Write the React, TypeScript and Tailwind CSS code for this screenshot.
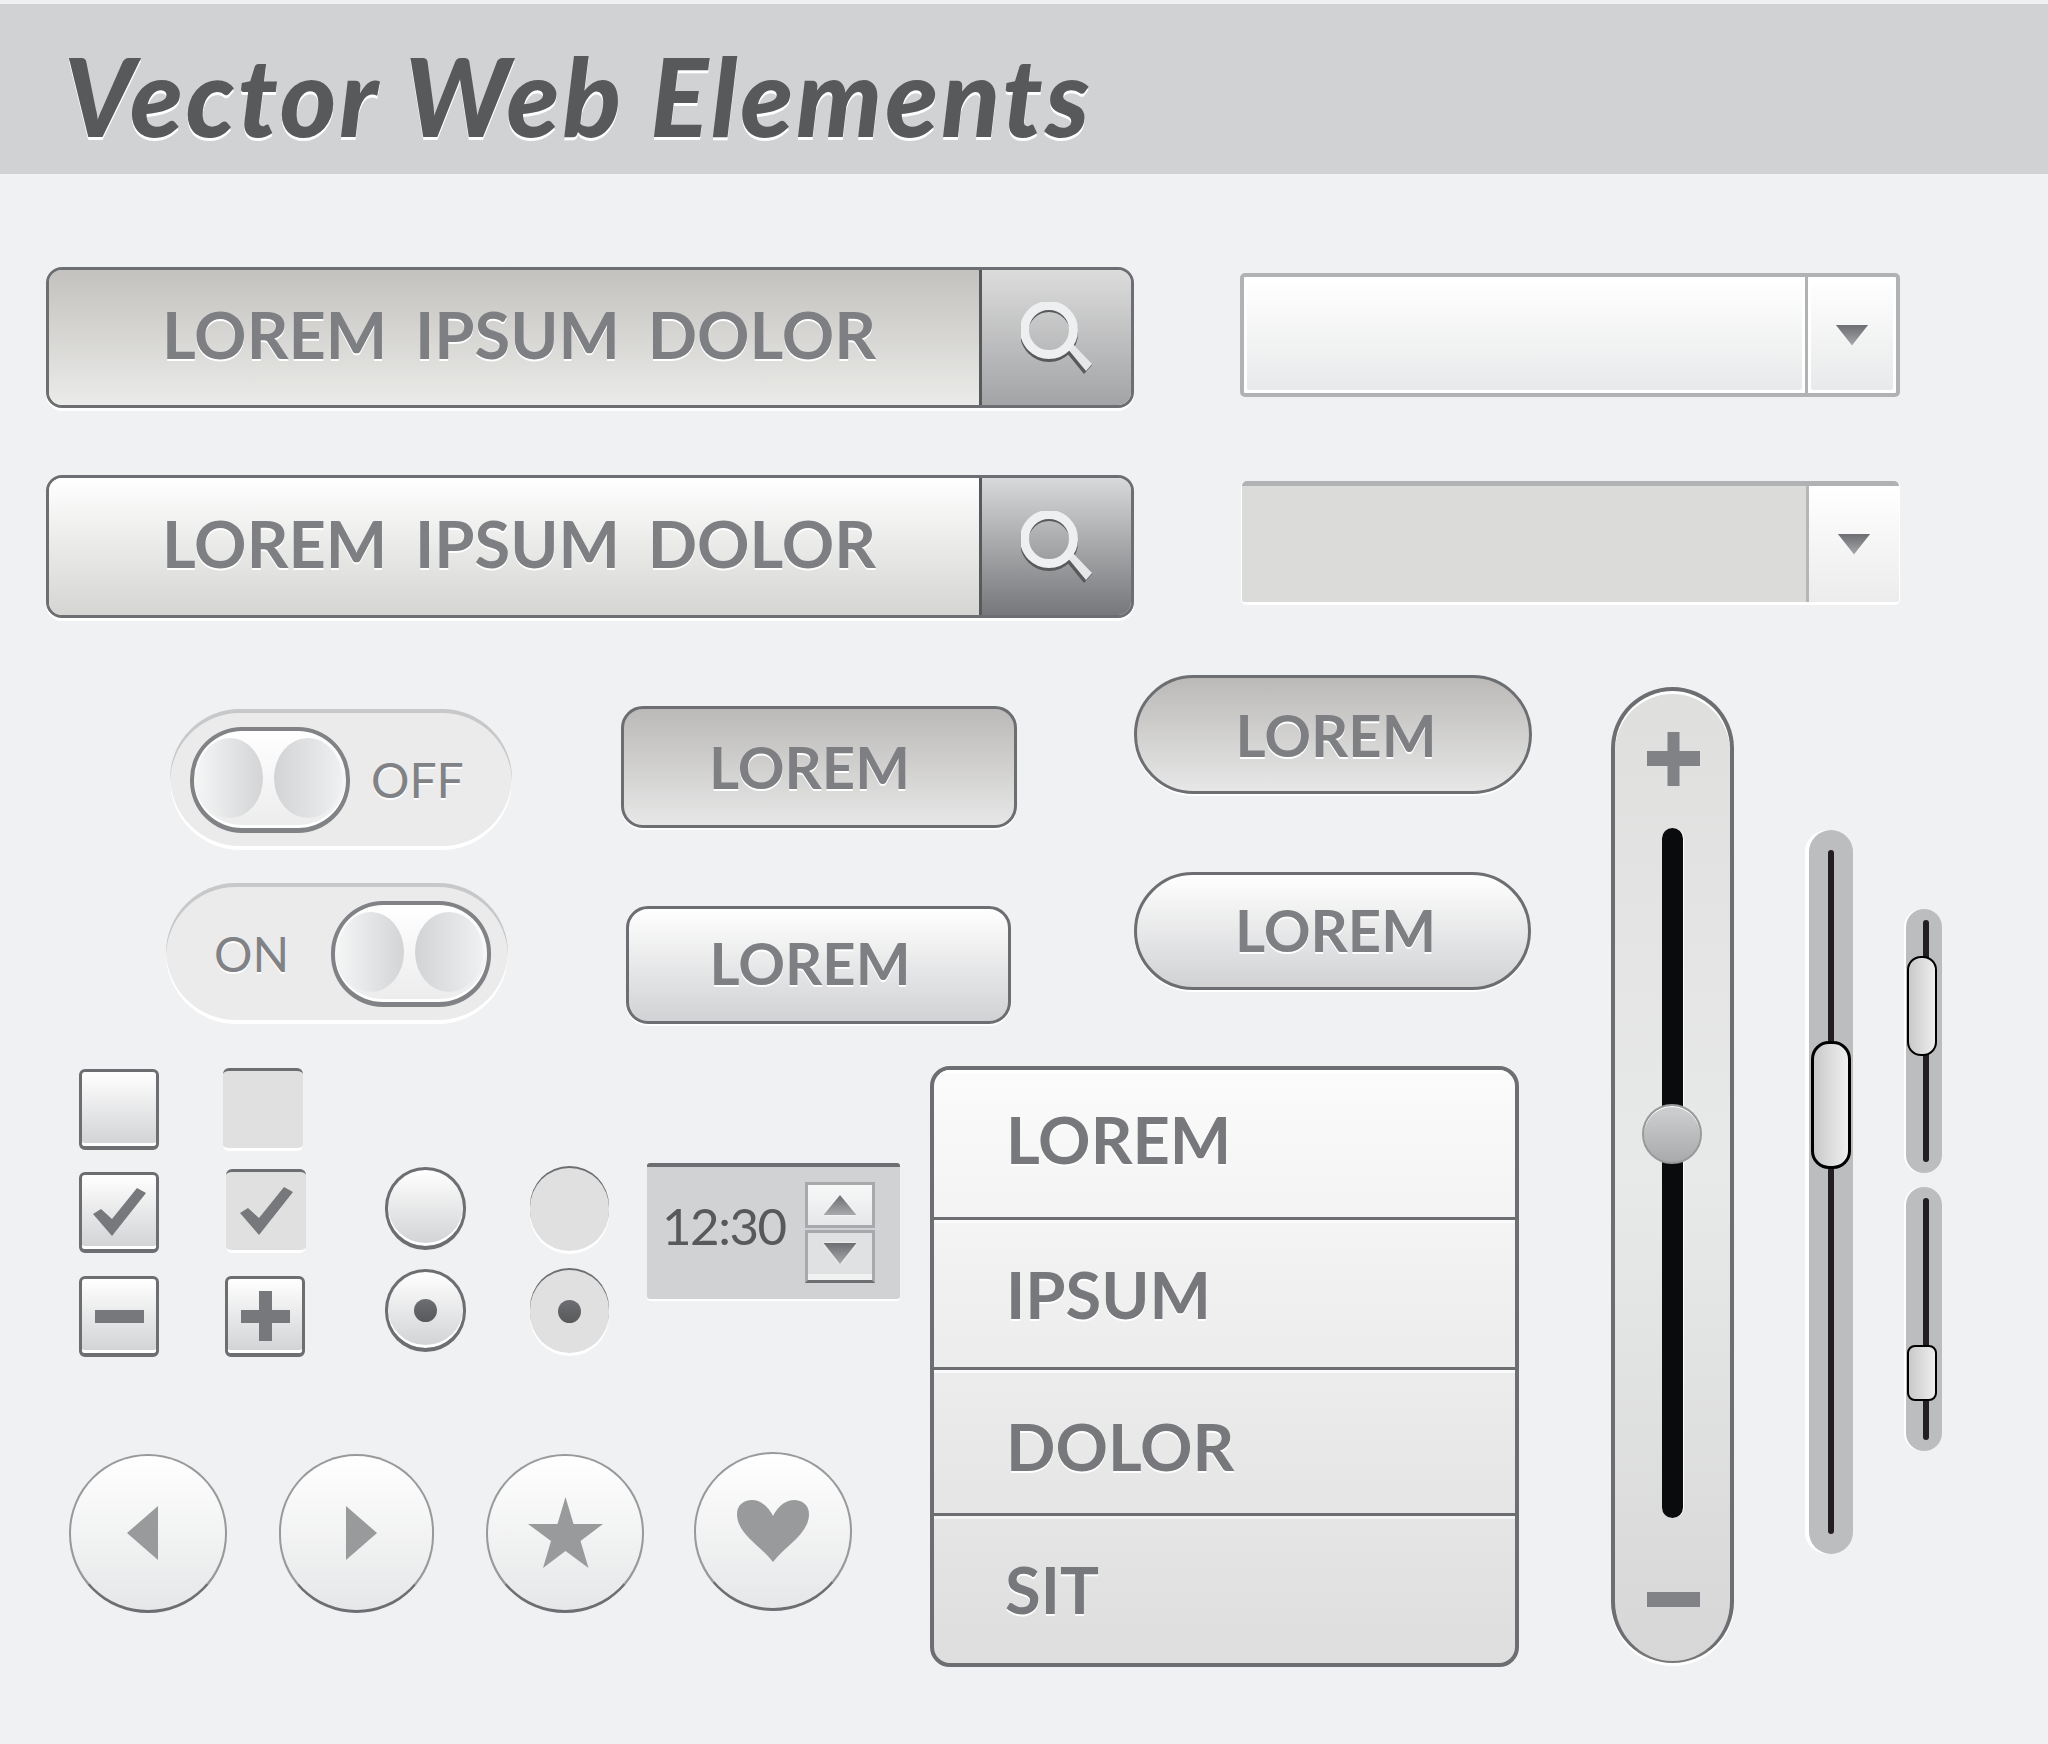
const label = "text-[#7d7f82] [text-shadow:0_2px_0_#fff] leading-none"

function Triangle({ up }: { up?: boolean }) {
  return (
    <div className="drop-shadow-[0_0_1px_#fff]">
      {up ? (
        <div className="w-[33px] h-[20px] [clip-path:polygon(50%_0,100%_100%,0_100%)] bg-linear-to-b from-[#6d6e71] to-[#a7a9ac]" />
      ) : (
        <div className="w-[33px] h-[21px] [clip-path:polygon(0_0,100%_0,50%_100%)] bg-linear-to-b from-[#6d6e71] to-[#a7a9ac]" />
      )}
    </div>
  )
}

function Magnifier() {
  return (
    <svg width="72" height="72" viewBox="0 0 72 72">
      <path d="M45 50 L63 72 L71 63 L53 44 Z" fill="#58595b" />
      <circle cx="28" cy="31" r="25" fill="none" stroke="#58595b" strokeWidth="8" />
      <path d="M46 46 L65 69 L71 62 L51 41 Z" fill="#e6e7e8" />
      <circle cx="28" cy="28" r="24.5" fill="none" stroke="#eeeff0" strokeWidth="9" />
    </svg>
  )
}

function SearchBar({ light }: { light?: boolean }) {
  return (
    <div className={`flex border-[3px] border-[#6d6e71] rounded-[16px] overflow-hidden shadow-[0_3px_0_#fff] ${light ? "h-[143px]" : "h-[141px]"}`}>
      <div className={`w-[930px] flex items-center pl-[113px] pb-[6px] bg-linear-to-b ${light ? "from-[#ffffff] to-[#d5d5d3]" : "from-[#c3c2bf] to-[#ebebe9]"}`}>
        <span className={`${label} text-[65px] font-bold [word-spacing:12px] whitespace-nowrap`}>LOREM IPSUM DOLOR</span>
      </div>
      <div className={`flex-1 flex items-center justify-center border-l-[3px] border-l-[#58595b] bg-linear-to-b ${light ? "from-[#d8d9da] to-[#77787b]" : "from-[#dcdcdc] to-[#a3a4a6]"}`}>
        <Magnifier />
      </div>
    </div>
  )
}

function DropdownRaised() {
  return (
    <div className="flex w-[660px] h-[124px] border-[4px] border-[#b1b2b3] rounded-[5px] bg-white">
      <div className="w-[561px] border-[3px] border-white rounded-[5px] bg-linear-to-b from-[#ffffff] to-[#e8e9ea]" />
      <div className="w-[3px] bg-[#b1b2b3]" />
      <div className="flex-1 border-[3px] border-white rounded-[5px] flex items-center justify-center bg-linear-to-b from-[#ffffff] to-[#e8e9ea]">
        <Triangle />
      </div>
    </div>
  )
}

function DropdownSunken() {
  return (
    <div className="flex w-[657px] h-[124px] border-t-[5px] border-t-[#b1b2b3] border-b-[3px] border-b-white rounded-[5px] shadow-[-1px_0_0_#fff,1px_0_0_#fff] overflow-hidden">
      <div className="w-[564px] bg-[#dbdbd9]" />
      <div className="flex-1 border-l-[3px] border-l-[#b5b6b7] flex items-center justify-center bg-linear-to-b from-[#ffffff] to-[#ececec]">
        <Triangle />
      </div>
    </div>
  )
}

function Knob() {
  return (
    <div className="w-[160px] h-[106px] rounded-[52px] border-[4px] border-b-[5px] border-[#808285] bg-linear-to-b from-[#ffffff] to-[#ececec] shadow-[inset_0_-3px_0_#fff] flex items-center gap-[11px] pl-[3px] pb-[2px]">
      <div className="w-[66px] h-[80px] rounded-[50%] bg-linear-to-r from-[#f4f5f5] to-[#d3d4d6]" />
      <div className="w-[68px] h-[80px] rounded-[50%] bg-linear-to-r from-[#d1d3d4] to-[#eff0f1]" />
    </div>
  )
}

function Toggle({ on }: { on?: boolean }) {
  const text = "text-[#808285] [text-shadow:0_2px_0_#fff] leading-none text-[48px]"
  return (
    <div className="w-[342px] h-[141px] rounded-[70px] bg-[#ebebeb] shadow-[inset_0_4px_0_#c7c8c9,inset_0_-4px_0_#fff] flex items-center">
      {on ? (
        <>
          <span className={`${text} ml-[48px]`}>ON</span>
          <div className="ml-auto mr-[17px]"><Knob /></div>
        </>
      ) : (
        <>
          <div className="ml-[20px]"><Knob /></div>
          <span className={`${text} ml-[21px]`}>OFF</span>
        </>
      )}
    </div>
  )
}

function LoremButton({ className }: { className: string }) {
  return (
    <div className={`flex items-center justify-center ${className}`}>
      <span className={`${label} text-[58px] font-bold`}>LOREM</span>
    </div>
  )
}

function Check() {
  return (
    <svg width="53" height="48" viewBox="0 0 53 48">
      <path d="M53 5 L44 0 L19 31 L8 21 L0 26 L19 48 Z" fill="#77787b" />
    </svg>
  )
}

function Box({ flat, className, children }: { flat?: boolean; className?: string; children?: React.ReactNode }) {
  const look = flat
    ? "bg-[#e0e0e0] border-t-[3px] border-t-[#6d6e71] border-b-[3px] border-b-white"
    : "border-[3px] border-b-[4px] border-[#6d6e71] bg-linear-to-b from-[#ffffff] to-[#d1d2d4] shadow-[inset_0_-3px_0_#fff]"
  return <div className={`flex items-center justify-center rounded-[6px] ${look} ${className ?? ""}`}>{children}</div>
}

function Radio({ flat, dot, className }: { flat?: boolean; dot?: boolean; className?: string }) {
  const look = flat
    ? "bg-[#e0e0e0] shadow-[0_-2px_0_#6d6e71,0_3px_0_#fff]"
    : "border-[3px] border-b-[4px] border-[#6d6e71] bg-linear-to-b from-[#ffffff] to-[#d1d2d4] shadow-[inset_0_-3px_0_#fff]"
  return (
    <div className={`rounded-full flex items-center justify-center ${look} ${className ?? ""}`}>
      {dot && <div className="w-[23px] h-[23px] rounded-full bg-linear-to-b from-[#6d6e71] to-[#58595b]" />}
    </div>
  )
}

function TimeBox() {
  return (
    <div className="w-[253px] h-[136px] ml-[38px] mt-[97px] bg-[#d1d2d4] border-t-[4px] border-t-[#6d6e71] rounded-[3px] shadow-[0_2px_0_#fff] flex">
      <span className="text-[51px] leading-none tracking-[-1.5px] text-[#58595b] ml-[15px] mt-[33px]">12:30</span>
      <div className="ml-auto mr-[25px] mt-[15px] w-[70px] h-[101px] flex flex-col">
        <div className="h-[47px] border-[3px] border-[#a7a9ac] bg-linear-to-b from-[#f7f8f8] to-[#e6e7e8] flex items-center justify-center">
          <Triangle up />
        </div>
        <div className="h-[54px] mt-[2px] border-[3px] border-[#a7a9ac] border-b-[#6d6e71] bg-[#e0e1e2] shadow-[inset_0_-6px_0_#f1f2f2] flex items-center justify-center pb-[6px]">
          <Triangle />
        </div>
      </div>
    </div>
  )
}

function RoundButton({ className, children }: { className: string; children: React.ReactNode }) {
  return (
    <div className={`h-[159px] rounded-full border-2 border-[#98999b] border-b-[3px] border-b-[#6d6e71] bg-linear-to-b from-[#ffffff] to-[#e6e7e8] flex items-center justify-center ${className}`}>
      {children}
    </div>
  )
}

function ListRow({ className, children }: { className: string; children: React.ReactNode }) {
  return (
    <div className={`flex items-center pl-[72px] ${className}`}>
      <span className="text-[65px] font-bold leading-none text-[#77787b] [text-shadow:0_2px_0_#fff]">{children}</span>
    </div>
  )
}

function MiniSlider({ thumbClass }: { thumbClass: string }) {
  return (
    <div className="relative w-[36px] h-[264px] rounded-[18px] bg-[#bbbdbf] shadow-[-2px_0_0_#fff] flex justify-center py-[11px]">
      <div className="w-[6px] ml-[3px] rounded-full bg-[#231f20]" />
      <div className={`absolute left-[1px] w-[30px] border-2 border-black bg-linear-to-r from-[#c9c9c9] to-[#eeeeee] ${thumbClass}`} />
    </div>
  )
}

export default function App() {
  return (
    <div className="w-[2048px] h-[1744px] bg-[#f0f1f3] pt-[4px] overflow-hidden [font-family:Lato,sans-serif]">
      {/* header */}
      <div className="h-[170px] bg-[#d1d2d4] flex items-center pl-[64px] pt-[12px]">
        <h1 className="text-[108px] font-black italic leading-none text-[#58595b] [text-shadow:0_3px_0_#fff] whitespace-nowrap tracking-[3px]">
          Vector Web Elements
        </h1>
      </div>

      {/* search + dropdowns */}
      <div className="flex pt-[93px]">
        <div className="ml-[46px] w-[1088px] flex flex-col gap-[67px]">
          <SearchBar />
          <SearchBar light />
        </div>
        <div className="ml-[106px] pt-[6px]">
          <DropdownRaised />
          <div className="mt-[84px] ml-[2px]">
            <DropdownSunken />
          </div>
        </div>
      </div>

      <div className="flex mt-[57px]">
        <div className="w-[1532px]">
          {/* toggles + buttons */}
          <div className="flex h-[349px]">
            <div className="ml-[166px] w-[346px] pt-[34px]">
              <div className="ml-[4px]"><Toggle /></div>
              <div className="mt-[33px]"><Toggle on /></div>
            </div>
            <div className="ml-[109px] w-[396px] pt-[31px]">
              <LoremButton className="w-[396px] h-[122px] pr-[19px] rounded-[22px] border-[3px] border-[#6d6e71] bg-linear-to-b from-[#bbbab8] to-[#e7e7e7] shadow-[0_2px_0_#fff]" />
              <LoremButton className="w-[385px] h-[118px] pr-[17px] pb-[4px] ml-[5px] mt-[78px] rounded-[22px] border-[3px] border-[#6d6e71] bg-linear-to-b from-[#ffffff] to-[#d1d2d4] shadow-[0_2px_0_#fff]" />
            </div>
            <div className="ml-[117px]">
              <LoremButton className="w-[398px] h-[119px] pl-[6px] rounded-full border-[3px] border-[#6d6e71] bg-linear-to-b from-[#bbbab8] to-[#e7e7e7] shadow-[0_2px_0_#fff]" />
              <LoremButton className="w-[397px] h-[118px] pl-[6px] pb-[2px] mt-[78px] rounded-full border-[3px] border-[#6d6e71] bg-linear-to-b from-[#ffffff] to-[#d1d2d4] shadow-[0_2px_0_#fff]" />
            </div>
          </div>

          {/* checks, radios, time, list */}
          <div className="flex mt-[42px]">
            <div className="w-[930px]">
              <div className="flex h-[291px]">
                <div className="ml-[79px] w-[80px] pt-[3px]">
                  <Box className="h-[81px]" />
                  <Box className="h-[81px] mt-[22px]"><Check /></Box>
                  <Box className="h-[81px] mt-[23px]">
                    <svg width="49" height="13"><rect width="49" height="13" fill="#77787b" /></svg>
                  </Box>
                </div>
                <div className="ml-[64px] w-[83px] pt-[2px]">
                  <Box flat className="w-[80px] h-[83px]" />
                  <Box flat className="w-[80px] h-[84px] mt-[18px] ml-[3px]"><Check /></Box>
                  <Box className="w-[80px] h-[81px] mt-[23px] ml-[2px]">
                    <svg width="49" height="50"><path d="M18 0h13v19h18v13H31v18H18V32H0V19h18z" fill="#77787b" /></svg>
                  </Box>
                </div>
                <div className="ml-[79px] w-[81px] pt-[101px]">
                  <Radio className="h-[83px]" />
                  <Radio dot className="h-[83px] mt-[19px]" />
                </div>
                <div className="ml-[64px] w-[79px] pt-[102px]">
                  <Radio flat className="h-[83px]" />
                  <Radio flat dot className="h-[83px] mt-[19px]" />
                </div>
                <TimeBox />
              </div>

              <div className="flex items-start ml-[69px] mt-[95px]">
                <RoundButton className="w-[158px] mt-[2px]">
                  <svg width="31" height="54" className="mr-[12px]"><path d="M31 0V54L0 27z" fill="#999a9b" /></svg>
                </RoundButton>
                <RoundButton className="w-[155px] mt-[2px] ml-[52px]">
                  <svg width="31" height="54" className="ml-[10px]"><path d="M0 0V54L31 27z" fill="#999a9b" /></svg>
                </RoundButton>
                <RoundButton className="w-[158px] mt-[2px] ml-[52px]">
                  <svg width="75" height="72" viewBox="0 0 75 72">
                    <path d="M37.5 0L45.5 27H75L52.5 44L60.5 71L37.5 54L15 71L23 44L0 27H29.5Z" fill="#999a9b" />
                  </svg>
                </RoundButton>
                <RoundButton className="w-[158px] ml-[50px]">
                  <svg width="72" height="62" viewBox="0 0 72 62">
                    <path d="M36 62C24 46 0 34 0 14C0 5 7 0 15 0C26 0 33 10 36 16C39 10 46 0 57 0C65 0 72 5 72 14C72 34 48 46 36 62Z" fill="#999a9b" />
                  </svg>
                </RoundButton>
              </div>
            </div>

            <div className="w-[589px] h-[601px] rounded-[20px] border-[4px] border-[#6d6e71] overflow-hidden bg-linear-to-b from-[#fbfbfb] to-[#dedede]">
              <ListRow className="h-[150px] pb-[8px] border-b-[3px] border-b-[#6d6e71] shadow-[inset_0_4px_0_#fff]">LOREM</ListRow>
              <ListRow className="h-[150px] pt-[2px] border-b-[3px] border-b-[#6d6e71] shadow-[inset_0_3px_0_#fafafa]">IPSUM</ListRow>
              <ListRow className="h-[146px] pt-[10px] border-b-[3px] border-b-[#6d6e71] shadow-[inset_0_3px_0_#fafafa]">DOLOR</ListRow>
              <ListRow className="h-[147px] shadow-[inset_0_3px_0_#f4f4f4] !pl-[71px]">SIT</ListRow>
            </div>
          </div>
        </div>

        {/* sliders */}
        <div className="flex items-start ml-[79px]">
          <div className="relative w-[123px] h-[976px] mt-[12px] rounded-[62px] border-[4px] border-b-2 border-[#6d6e71] border-b-[#777] bg-linear-to-b from-[#dfdfde] via-[#e8e9e9] to-[#d7d7d7] shadow-[inset_0_3px_0_#fff,0_3px_0_#fff] flex flex-col items-center">
            <svg width="53" height="54" className="mt-[41px] ml-[1px]">
              <path d="M20.500 0h12v19h20.500v15H32.500v20h-12V34H0V19h20.500z" fill="#808285" />
            </svg>
            <div className="w-[21px] h-[690px] mt-[42px] rounded-full bg-[#0a0b0c] shadow-[1px_0_0_#fff]" />
            <svg width="53" height="15" className="mt-[74px] ml-[1px]"><rect width="53" height="15" fill="#808285" /></svg>
            <div className="absolute left-[27px] top-[413px] w-[60px] h-[60px] rounded-full border-2 border-[#98999b] bg-linear-to-b from-[#cfd0d2] to-[#a9aaac] shadow-[inset_0_1px_0_#fff]" />
          </div>

          <div className="relative w-[44px] h-[724px] mt-[155px] ml-[75px] rounded-[22px] bg-[#bbbdbf] shadow-[-4px_0_0_#fff] flex justify-center py-[20px]">
            <div className="w-[6px] rounded-full bg-[#231f20]" />
            <div className="absolute left-[2px] top-[211px] w-[40px] h-[128px] rounded-[18px] border-[3px] border-black bg-linear-to-r from-[#c9c9c9] to-[#f0f0f0]" />
          </div>

          <div className="mt-[234px] ml-[53px] flex flex-col gap-[14px]">
            <MiniSlider thumbClass="top-[47px] h-[100px] rounded-[14px]" />
            <MiniSlider thumbClass="top-[158px] h-[56px] rounded-[8px]" />
          </div>
        </div>
      </div>
    </div>
  )
}
